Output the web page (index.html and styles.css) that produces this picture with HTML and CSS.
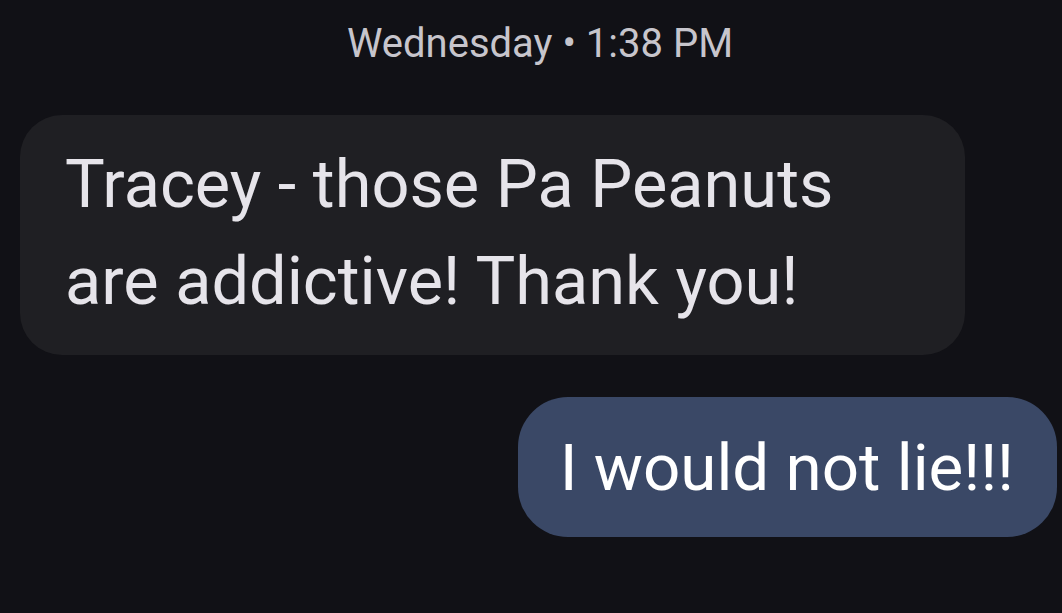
FILE: index.html
```html
<!DOCTYPE html>
<html>
<head>
<meta charset="utf-8">
<link rel="stylesheet" href="styles.css">
</head>
<body>
<div class="thread">
  <div class="stamp">Wednesday • 1:38 PM</div>
  <div class="msg recv">Tracey - those Pa Peanuts are addictive! Thank you!</div>
  <div class="msg sent">I would not lie!!!</div>
</div>
</body>
</html>
```

FILE: styles.css
```css
html, body {
  margin: 0;
  padding: 0;
  background: #111116;
  height: 100%;
}
.thread {
  display: flex;
  flex-direction: column;
  padding: 21px 5px 0 20px;
  font-family: Roboto, "Noto Sans", sans-serif;
}
.stamp {
  align-self: center;
  margin-left: 3px;
  font-size: 40px;
  line-height: 46px;
  color: #c7c5cc;
  margin-bottom: 48px;
}
.msg {
  font-size: 66.7px;
  line-height: 97px;
  box-sizing: border-box;
}
.recv {
  align-self: flex-start;
  width: 945px;
  background: #1f1f23;
  color: #e6e4ea;
  border-radius: 42px;
  padding: 21px 40px 25px 45px;
}
.sent {
  align-self: flex-end;
  margin-top: 42px;
  font-size: 65.5px;
  background: #3a4866;
  color: #ffffff;
  border-radius: 50px;
  padding: 22px 43px 21px 42px;
}
```
